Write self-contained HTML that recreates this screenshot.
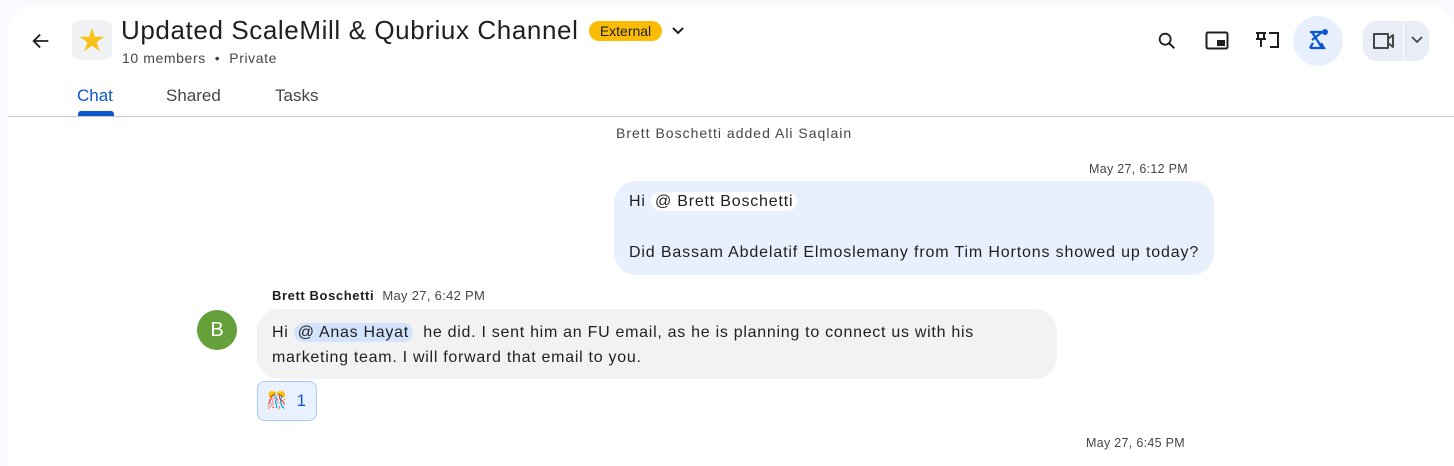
<!DOCTYPE html>
<html><head><meta charset="utf-8"><style>
*{box-sizing:border-box;margin:0;padding:0}
body{width:1454px;height:452px;background:#f8fafd;font-family:"Liberation Sans",sans-serif;color:#1f1f1f;overflow:hidden;position:relative}
.card{position:absolute;left:8px;top:6px;width:1446px;height:460px;background:#fff;border-radius:24px 24px 0 0}
.a{position:absolute;white-space:nowrap}
.mention{background:#fff;border-radius:10px;padding:1px 4px}
</style></head><body>
<div class="card"></div>
<svg class="a" style="left:30px;top:30px" width="22" height="22" viewBox="0 0 24 24"><path d="M20 12H5M11 5l-7 7 7 7" stroke="#1f1f1f" stroke-width="2" fill="none"/></svg>
<div class="a" style="left:72px;top:20px;width:40px;height:40px;background:#f0f1f3;border-radius:8px;font-size:32px;text-align:center;line-height:40px;color:#f7c21a">★</div>
<div class="a" style="left:121px;top:15px;font-size:26px;letter-spacing:0.6px;color:#1f1f1f">Updated ScaleMill &amp; Qubriux Channel</div>
<div class="a" style="left:589px;top:21px;width:73px;height:20px;background:#fbbc04;border-radius:10px;font-size:14px;text-align:center;line-height:20px">External</div>
<svg class="a" style="left:671px;top:25px" width="14" height="12" viewBox="0 0 14 12"><path d="M2 3l5 5 5-5" stroke="#1f1f1f" stroke-width="2" fill="none"/></svg>
<div class="a" style="left:122px;top:50px;font-size:14px;letter-spacing:0.6px;color:#444746">10 members &nbsp;•&nbsp; Private</div>
<div class="a" style="left:77px;top:86px;font-size:17px;color:#0b57d0">Chat</div>
<div class="a" style="left:78px;top:111px;width:36px;height:5px;background:#0b57d0;border-radius:3px 3px 0 0"></div>
<div class="a" style="left:166px;top:86px;font-size:17px;color:#444746">Shared</div>
<div class="a" style="left:275px;top:86px;font-size:17px;color:#444746">Tasks</div>
<div class="a" style="left:8px;top:116px;width:1446px;height:1px;background:#c4c7c5"></div>
<svg class="a" style="left:1156px;top:30px" width="22" height="22" viewBox="0 0 24 24"><circle cx="10" cy="10" r="6" stroke="#1f1f1f" stroke-width="2" fill="none"/><path d="M14.5 14.5L20 20" stroke="#1f1f1f" stroke-width="2.2"/></svg>
<svg class="a" style="left:1205px;top:30px" width="24" height="22" viewBox="0 0 24 22"><rect x="1.5" y="2.5" width="21" height="16" rx="1.5" stroke="#1f1f1f" stroke-width="2" fill="none"/><rect x="12" y="10" width="8" height="6" fill="#1f1f1f"/></svg>
<svg class="a" style="left:1254px;top:30px" width="28" height="24" viewBox="0 0 28 24"><path d="M2 3h10M4 3v6h6V3M2 9h10M7 9v8M15 3h9v14h-8" stroke="#1f1f1f" stroke-width="2" fill="none"/></svg>
<div class="a" style="left:1293px;top:16px;width:50px;height:50px;border-radius:50%;background:#e8f0fe"></div>
<svg class="a" style="left:1306px;top:28px" width="24" height="26" viewBox="0 0 24 26"><path d="M4 4h12M6 4l10 16M16 4 6 12M4 20h14l-3-5M4 20l3-5" stroke="#0b57d0" stroke-width="2.2" fill="none"/><circle cx="19" cy="4" r="3" fill="#0b57d0"/></svg>
<div class="a" style="left:1363px;top:21px;width:66px;height:40px;border-radius:14px;background:#e9eef6"></div>
<div class="a" style="left:1403px;top:21px;width:1px;height:40px;background:#fff"></div>
<svg class="a" style="left:1371px;top:30px" width="26" height="22" viewBox="0 0 26 22"><path d="M3 4h14v14H3zM17 9l5-4v12l-5-4" stroke="#444746" stroke-width="2" fill="none" stroke-linejoin="round"/></svg>
<svg class="a" style="left:1410px;top:35px" width="14" height="10" viewBox="0 0 14 10"><path d="M2 2l5 5 5-5" stroke="#444746" stroke-width="1.8" fill="none"/></svg>
<div class="a" style="left:616px;top:125px;font-size:14px;letter-spacing:1px;color:#444746">Brett Boschetti added Ali Saqlain</div>
<div class="a" style="left:1089px;top:162px;font-size:12.5px;letter-spacing:0.3px;color:#444746">May 27, 6:12 PM</div>
<div class="a" style="left:614px;top:181px;width:600px;height:94px;background:#e9f0fd;border-radius:22px"></div>
<div class="a" style="left:629px;top:193px;font-size:16px;letter-spacing:0.8px">Hi <span class="mention">@ Brett Boschetti</span></div>
<div class="a" style="left:629px;top:244px;font-size:16px;letter-spacing:0.85px">Did Bassam Abdelatif Elmoslemany from Tim Hortons showed up today?</div>
<div class="a" style="left:272px;top:288px;font-size:13px;font-weight:bold;letter-spacing:0.6px;color:#1f1f1f">Brett Boschetti <span style="font-weight:normal;color:#444746;margin-left:4px;letter-spacing:0.3px">May 27, 6:42 PM</span></div>
<div class="a" style="left:197px;top:310px;width:40px;height:40px;border-radius:50%;background:#66a03b;color:#fff;font-size:20px;text-align:center;line-height:40px">B</div>
<div class="a" style="left:257px;top:309px;width:800px;height:70px;background:#f2f2f2;border-radius:22px"></div>
<div class="a" style="left:272px;top:320px;font-size:16px;line-height:25px;letter-spacing:0.72px">Hi <span class="mention" style="background:#d3e3fd">@ Anas Hayat</span> &nbsp;he did. I sent him an FU email, as he is planning to connect us with his<br>marketing team. I will forward that email to you.</div>
<div class="a" style="left:257px;top:381px;width:60px;height:40px;border:1px solid #a8c7fa;background:#eaf1fe;border-radius:8px;font-size:17px;line-height:38px;padding-left:8px;color:#0b57d0">🎊 &nbsp;1</div>
<div class="a" style="left:1086px;top:436px;font-size:12.5px;letter-spacing:0.3px;color:#444746">May 27, 6:45 PM</div>
</body></html>
